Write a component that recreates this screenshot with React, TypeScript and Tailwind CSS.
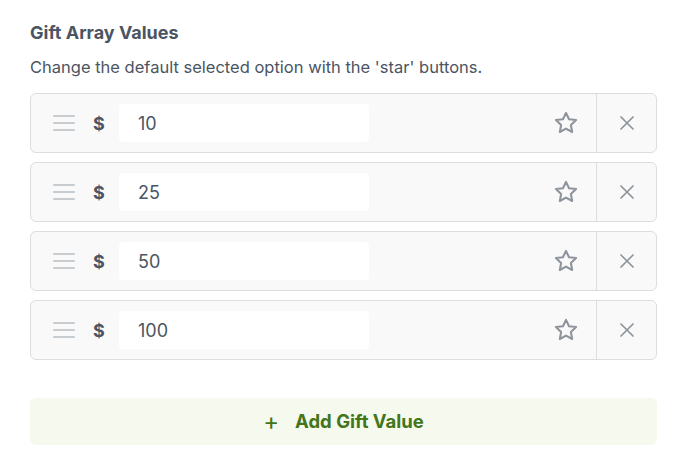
import React from "react";

const values = ["10", "25", "50", "100"];

const GripIcon = () => (
  <svg width="22" height="18" viewBox="0 0 22 18" fill="none">
    <rect x="0" y="1" width="22" height="2" rx="1" fill="#c7ccd1" />
    <rect x="0" y="8" width="22" height="2" rx="1" fill="#c7ccd1" />
    <rect x="0" y="15" width="22" height="2" rx="1" fill="#c7ccd1" />
  </svg>
);

const StarIcon = () => (
  <svg width="26" height="26" viewBox="0 0 24 24" fill="none" stroke="#8d949b" strokeWidth="1.9" strokeLinejoin="round">
    <path d="M12 2.6l2.8 5.9 6.5.8-4.8 4.5 1.2 6.5L12 17.2l-5.7 3.1 1.2-6.5-4.8-4.5 6.5-.8z" />
  </svg>
);

const CloseIcon = () => (
  <svg width="14" height="14" viewBox="0 0 14 14" fill="none" stroke="#8d949b" strokeWidth="1.7" strokeLinecap="round">
    <path d="M1 1l12 12M13 1L1 13" />
  </svg>
);

const GiftRow = ({ value }: { value: string }) => (
  <div className="flex h-[60px] items-stretch rounded-md border border-[#dcdddf] bg-[#f9f9f9]">
    <div className="flex flex-1 items-center">
      <div className="ml-[22px] flex w-[22px] items-center">
        <GripIcon />
      </div>
      <span className="ml-[18px] w-[20px] text-[18px] font-bold text-[#4b5563]">$</span>
      <div className="ml-[6px] flex h-[38px] w-[250px] items-center rounded bg-white pl-[19px] text-[18px] text-[#4b5563]">
        {value}
      </div>
      <div className="ml-auto mr-[17px] flex items-center">
        <StarIcon />
      </div>
    </div>
    <div className="flex w-[60px] items-center justify-center border-l border-[#dcdddf]">
      <CloseIcon />
    </div>
  </div>
);

export default function App() {
  return (
    <div className="min-h-[472px] w-[698px] bg-white pl-[30px] pr-[41px] pt-[22px] font-['Inter',sans-serif]">
      <h3 className="text-[18px] font-bold leading-[22px] text-[#4b5563]">Gift Array Values</h3>
      <p className="mt-[12px] text-[16.5px] leading-[22px] text-[#4b5563]">
        Change the default selected option with the 'star' buttons.
      </p>
      <div className="mt-[15px] flex flex-col gap-[9px]">
        {values.map((v) => (
          <GiftRow key={v} value={v} />
        ))}
      </div>
      <button className="mt-[38px] flex h-[47px] w-full items-center justify-center gap-[16px] rounded-md bg-[#f5f9ee] text-[18.5px] font-bold text-[#427619]">
        <span className="text-[24px] font-normal leading-none">+</span>
        <span>Add Gift Value</span>
      </button>
    </div>
  );
}
